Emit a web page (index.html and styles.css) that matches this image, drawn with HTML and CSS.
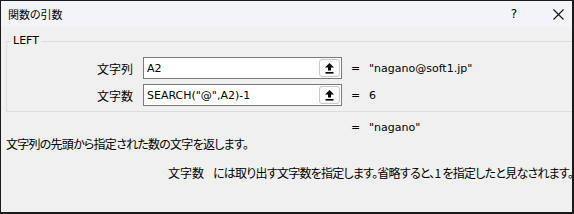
FILE: index.html
```html
<!DOCTYPE html>
<html lang="ja">
<head>
  <meta charset="UTF-8">
  <title>関数の引数</title>
  <link rel="stylesheet" href="styles.css">
</head>
<body>

  <div class="dialog">
    <div class="titlebar">
      <span class="title ja">関数の引数</span>
      <span class="help">?</span>
      <span class="close">
        <svg width="11" height="11" viewBox="0 0 11 11"><path d="M0.5 0.5 L10.5 10.5 M10.5 0.5 L0.5 10.5" stroke="#111" stroke-width="1.1" fill="none"/></svg>
      </span>
    </div>

    <div class="content">
      <fieldset class="group">
        <legend>LEFT</legend>
        <div class="args">
          <label class="ja" for="arg1">文字列</label>
          <div class="field">
            <input type="text" id="arg1" value="A2">
            <button class="ref-btn"><svg width="9" height="11" viewBox="0 0 9 11"><path d="M4.5 0 L9 4.5 L6 4.5 L6 7.5 L3 7.5 L3 4.5 L0 4.5 Z" fill="#000"/><rect x="0.5" y="9" width="8" height="1.6" fill="#000"/></svg></button>
          </div>
          <span class="eq">=</span>
          <span class="val">"nagano@soft1.jp"</span>

          <label class="ja" for="arg2">文字数</label>
          <div class="field">
            <input type="text" id="arg2" value='SEARCH("@",A2)-1'>
            <button class="ref-btn"><svg width="9" height="11" viewBox="0 0 9 11"><path d="M4.5 0 L9 4.5 L6 4.5 L6 7.5 L3 7.5 L3 4.5 L0 4.5 Z" fill="#000"/><rect x="0.5" y="9" width="8" height="1.6" fill="#000"/></svg></button>
          </div>
          <span class="eq">=</span>
          <span class="val">6</span>
        </div>
      </fieldset>

      <div class="result">
        <span class="eq">=</span>
        <span class="val">"nagano"</span>
      </div>

      <p class="desc ja"><span class="tight">文字列の先頭から指定された数の文字を返します。</span></p>
      <p class="arg-desc ja"><span class="arg-name">文字数</span><span class="tight">には取り出す文字数を指定します。省略すると、1&nbsp;を指定したと見なされます。</span></p>
    </div>
  </div>

</body>
</html>
```

FILE: styles.css
```css
* { box-sizing: border-box; }
html, body { margin: 0; padding: 0; }
body { width: 574px; height: 214px; overflow: hidden; font-family: "DejaVu Sans", "Noto Sans CJK JP", sans-serif; font-size: 11px; color: #000; }

.ja { font-family: "Noto Sans CJK JP", sans-serif; font-size: 12px; font-feature-settings: "palt"; }
.tight { letter-spacing: -0.75px; }

.dialog { width: 574px; height: 214px; border: 1px solid #1a1a1a; border-right-width: 2px; border-bottom-width: 2px; background: #f0f0f0; overflow: hidden; }

.titlebar { height: 26px; background: #f3f4f9; display: flex; align-items: center; padding-left: 7px; }
.title { flex: 1; font-size: 11px; }
.help { width: 20px; text-align: center; font-size: 12px; }
.close { width: 28px; margin-left: 20px; display: flex; justify-content: center; }

.content { padding: 7px 0 0 5px; }

.group { margin: 0 -12px 0 0; padding: 9px 0 5px 0; border: 1px solid #dcdcdc; }
.group legend { margin-left: 4px; padding: 0 2px; font-size: 11px; line-height: 14px; }

.args { display: grid; grid-template-columns: 127px 199px 9px auto; column-gap: 9px; row-gap: 5px; align-items: center; }
.args label { text-align: right; padding-right: 1px; }

.field { display: flex; align-items: center; height: 22px; border: 1px solid #7a7a7a; background: #fff; padding: 0 1px 0 3px; }
.field input { flex: 1; min-width: 0; border: none; outline: none; padding: 0; background: transparent; font: inherit; color: #000; }
.ref-btn { width: 21px; height: 18px; padding: 0; border: 1px solid #c8c8c8; border-radius: 3px; background: #fbfbfb; display: flex; align-items: center; justify-content: center; }

.eq { text-align: center; }

.result { display: flex; padding-left: 345px; margin-top: 9px; line-height: 14px; }
.result .eq { width: 9px; margin-right: 9px; }

.desc { margin: 2px 0 0 0; line-height: 14px; }
.arg-desc { margin: 15px 0 0 0; padding-left: 162px; line-height: 14px; white-space: nowrap; }
.arg-name { margin-right: 9px; }
```
